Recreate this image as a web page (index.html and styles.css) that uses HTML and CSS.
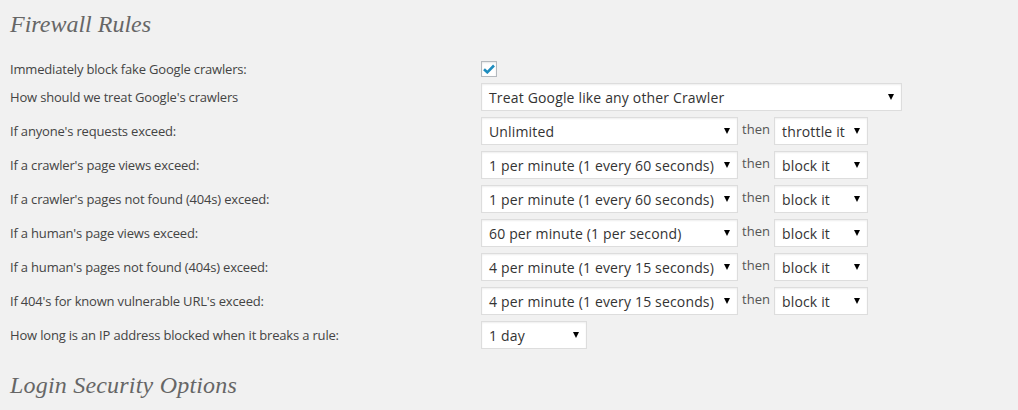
FILE: index.html
```html
<!DOCTYPE html>
<html>
<head>
<meta charset="utf-8">
<link rel="stylesheet" href="styles.css">
</head>
<body>
<div class="page">
  <h2 class="section-title">Firewall Rules</h2>
  <div class="rules">
    <div class="row row-check">
      <div class="label">Immediately block fake Google crawlers:</div>
      <div class="control">
        <span class="checkbox"><svg width="12" height="10" viewBox="0 0 12 10"><path d="M1 5.2 L4.3 8.3 L11 1.5" fill="none" stroke="#1e8cbe" stroke-width="2.6" stroke-linejoin="miter"/></svg></span>
      </div>
    </div>
    <div class="row">
      <div class="label">How should we treat Google's crawlers</div>
      <div class="control">
        <div class="select w-wide"><span>Treat Google like any other Crawler</span><i class="arrow"></i></div>
      </div>
    </div>
    <div class="row">
      <div class="label">If anyone's requests exceed:</div>
      <div class="control">
        <div class="select w-main"><span>Unlimited</span><i class="arrow"></i></div>
        <span class="then">then</span>
        <div class="select w-action"><span>throttle it</span><i class="arrow"></i></div>
      </div>
    </div>
    <div class="row">
      <div class="label">If a crawler's page views exceed:</div>
      <div class="control">
        <div class="select w-main"><span>1 per minute (1 every 60 seconds)</span><i class="arrow"></i></div>
        <span class="then">then</span>
        <div class="select w-action"><span>block it</span><i class="arrow"></i></div>
      </div>
    </div>
    <div class="row">
      <div class="label">If a crawler's pages not found (404s) exceed:</div>
      <div class="control">
        <div class="select w-main"><span>1 per minute (1 every 60 seconds)</span><i class="arrow"></i></div>
        <span class="then">then</span>
        <div class="select w-action"><span>block it</span><i class="arrow"></i></div>
      </div>
    </div>
    <div class="row">
      <div class="label">If a human's page views exceed:</div>
      <div class="control">
        <div class="select w-main"><span>60 per minute (1 per second)</span><i class="arrow"></i></div>
        <span class="then">then</span>
        <div class="select w-action"><span>block it</span><i class="arrow"></i></div>
      </div>
    </div>
    <div class="row">
      <div class="label">If a human's pages not found (404s) exceed:</div>
      <div class="control">
        <div class="select w-main"><span>4 per minute (1 every 15 seconds)</span><i class="arrow"></i></div>
        <span class="then">then</span>
        <div class="select w-action"><span>block it</span><i class="arrow"></i></div>
      </div>
    </div>
    <div class="row">
      <div class="label">If 404's for known vulnerable URL's exceed:</div>
      <div class="control">
        <div class="select w-main"><span>4 per minute (1 every 15 seconds)</span><i class="arrow"></i></div>
        <span class="then">then</span>
        <div class="select w-action"><span>block it</span><i class="arrow"></i></div>
      </div>
    </div>
    <div class="row">
      <div class="label">How long is an IP address blocked when it breaks a rule:</div>
      <div class="control">
        <div class="select w-short"><span>1 day</span><i class="arrow"></i></div>
      </div>
    </div>
  </div>
  <h2 class="section-title second">Login Security Options</h2>
</div>
</body>
</html>
```

FILE: styles.css
```css
html, body {
  margin: 0;
  padding: 0;
  background: #f1f1f1;
}
body {
  font-family: "Open Sans", "Liberation Sans", sans-serif;
  font-size: 13px;
  color: #444;
}
.page {
  padding: 0 10px;
}
.section-title {
  font-family: "Liberation Serif", "DejaVu Serif", serif;
  font-style: italic;
  font-weight: normal;
  font-size: 24px;
  line-height: 30px;
  color: #666;
  margin: 0;
  padding-top: 9px;
  height: 49px;
}
.section-title.second {
  padding-top: 18px;
  letter-spacing: 0.2px;
}
.rules {
  display: flex;
  flex-direction: column;
}
.row {
  display: flex;
  align-items: center;
  height: 34px;
}
.row-check {
  height: 22px;
}
.label {
  width: 471px;
  flex: none;
  line-height: 18px;
  letter-spacing: -0.18px;
}
.control {
  display: flex;
  align-items: center;
}
.checkbox {
  width: 14px;
  height: 14px;
  border: 1px solid #b4b9be;
  background: #fff;
  box-shadow: inset 0 1px 2px rgba(0,0,0,.1);
  display: flex;
  align-items: center;
  justify-content: center;
}
.select {
  box-sizing: border-box;
  height: 28px;
  border: 1px solid #ddd;
  background: #fff;
  box-shadow: inset 0 1px 2px rgba(0,0,0,.07);
  display: flex;
  align-items: center;
  justify-content: space-between;
  padding: 1px 7px 0 7px;
  font-size: 14px;
  letter-spacing: 0.16px;
  color: #333;
}
.arrow {
  width: 0;
  height: 0;
  border-left: 3.5px solid transparent;
  border-right: 3.5px solid transparent;
  border-top: 6px solid #000;
  margin-top: -2px;
}
.w-wide { width: 421px; }
.w-main { width: 257px; }
.w-action { width: 94px; }
.w-short { width: 106px; }
.then {
  width: 36px;
  text-align: center;
  color: #555;
  font-size: 13px;
  margin-top: -4px;
}
```
